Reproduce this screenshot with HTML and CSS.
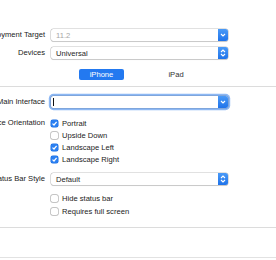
FILE: index.html
```html
<!DOCTYPE html>
<html>
<head>
<meta charset="utf-8">
<link rel="stylesheet" href="styles.css">
</head>
<body>
<div class="panel">
  <div class="row r1">
    <div class="label">Deployment Target</div>
    <div class="field">
      <span class="value placeholder">11.2</span>
      <span class="btn"><svg width="6" height="4" viewBox="0 0 6 4"><path d="M1 1 L3 3 L5 1" fill="none" stroke="#fff" stroke-width="1.1"/></svg></span>
    </div>
  </div>
  <div class="row r2">
    <div class="label">Devices</div>
    <div class="field">
      <span class="value">Universal</span>
      <span class="btn"><svg width="6" height="8" viewBox="0 0 6 8"><path d="M1 3 L3 1 L5 3 M1 5 L3 7 L5 5" fill="none" stroke="#fff" stroke-width="1.1"/></svg></span>
    </div>
  </div>
  <div class="seg">
    <span class="seg-item active">iPhone</span>
    <span class="seg-item">iPad</span>
  </div>
  <div class="divider d1"></div>
  <div class="row r3">
    <div class="label">Main Interface</div>
    <div class="field focus">
      <span class="value"><span class="caret"></span></span>
      <span class="btn"><svg width="6" height="4" viewBox="0 0 6 4"><path d="M1 1 L3 3 L5 1" fill="none" stroke="#fff" stroke-width="1.1"/></svg></span>
    </div>
  </div>
  <div class="group g1">
    <div class="label">Device Orientation</div>
    <div class="checks">
      <div class="check"><span class="box on"><svg width="7" height="7" viewBox="0 0 7 7"><path d="M1.5 3.6 L3 5 L5.6 1.8" fill="none" stroke="#fff" stroke-width="1.2"/></svg></span>Portrait</div>
      <div class="check"><span class="box"></span>Upside Down</div>
      <div class="check"><span class="box on"><svg width="7" height="7" viewBox="0 0 7 7"><path d="M1.5 3.6 L3 5 L5.6 1.8" fill="none" stroke="#fff" stroke-width="1.2"/></svg></span>Landscape Left</div>
      <div class="check"><span class="box on"><svg width="7" height="7" viewBox="0 0 7 7"><path d="M1.5 3.6 L3 5 L5.6 1.8" fill="none" stroke="#fff" stroke-width="1.2"/></svg></span>Landscape Right</div>
    </div>
  </div>
  <div class="row r4">
    <div class="label">Status Bar Style</div>
    <div class="field">
      <span class="value">Default</span>
      <span class="btn"><svg width="6" height="8" viewBox="0 0 6 8"><path d="M1 3 L3 1 L5 3 M1 5 L3 7 L5 5" fill="none" stroke="#fff" stroke-width="1.1"/></svg></span>
    </div>
  </div>
  <div class="group g2">
    <div class="label"></div>
    <div class="checks">
      <div class="check tall"><span class="box"></span>Hide status bar</div>
      <div class="check tall"><span class="box"></span>Requires full screen</div>
    </div>
  </div>
  <div class="divider d2"></div>
  <div class="divider d3"></div>
</div>
</body>
</html>
```

FILE: styles.css
```css
html, body {
  margin: 0;
  padding: 0;
  background: #ffffff;
}
body {
  width: 276px;
  height: 260px;
  overflow: hidden;
  font-family: "Liberation Sans", Arial, sans-serif;
  font-size: 7.6px;
  color: #222222;
}
.panel {
  padding-top: 29px;
  display: flex;
  flex-direction: column;
}
.row {
  display: flex;
  align-items: center;
  height: 12px;
}
.label {
  width: 45px;
  flex: none;
  display: flex;
  justify-content: flex-end;
  white-space: nowrap;
  margin-right: 6px;
  line-height: 12px;
}
.field {
  width: 177px;
  height: 12px;
  box-sizing: border-box;
  display: flex;
  align-items: stretch;
  background: #fff;
  border-radius: 2.5px;
  box-shadow: 0 0 0 0.6px rgba(0,0,0,0.22), 0 0.8px 0.8px rgba(0,0,0,0.12);
}
.field .value {
  flex: 1;
  display: flex;
  align-items: center;
  padding-left: 5px;
  color: #1e1e1e;
}
.field .placeholder {
  color: #a6a6a6;
}
.btn {
  width: 10px;
  flex: none;
  display: flex;
  align-items: center;
  justify-content: center;
  background: linear-gradient(#4a9af7, #1f73ea);
  border-radius: 0 2.5px 2.5px 0;
}
.r1 { margin-bottom: 6px; }
.r2 { margin-bottom: 10px; }
.seg {
  display: flex;
  height: 11px;
  align-items: center;
  margin-bottom: 6px;
}
.seg-item {
  display: flex;
  align-items: center;
  justify-content: center;
  height: 11px;
}
.seg-item.active {
  margin-left: 79px;
  width: 45px;
  background: #2379f0;
  color: #fff;
  border-radius: 2px;
}
.seg-item:not(.active) {
  margin-left: 45px;
  width: 14px;
  color: #333;
}
.divider {
  height: 1px;
  background: #dcdcdc;
}
.d1 { margin-bottom: 9px; }
.r3 { margin-bottom: 9px; }
.field.focus {
  box-shadow: 0 0 0 0.6px rgba(0,0,0,0.2), 0 0 0 2.2px #8db8f4;
}
.field.focus .value { padding-left: 2px; }
.caret {
  width: 1px;
  height: 8px;
  background: #111;
}
.group {
  display: flex;
  align-items: flex-start;
}
.checks {
  display: flex;
  flex-direction: column;
}
.check {
  height: 12px;
  display: flex;
  align-items: center;
  white-space: nowrap;
}
.check.tall { height: 13px; }
.box {
  width: 7px;
  height: 7px;
  box-sizing: border-box;
  border-radius: 1.8px;
  background: #fff;
  box-shadow: 0 0 0 0.7px rgba(0,0,0,0.3);
  margin-right: 4px;
  display: flex;
  align-items: center;
  justify-content: center;
}
.box.on {
  background: #2a7ff1;
  box-shadow: 0 0 0 0.5px #1c6fe0;
}
.g1 { margin-bottom: 8px; }
.r4 { margin-bottom: 7px; }
.g2 { margin-bottom: 9px; }
.d2 { margin-bottom: 29px; }
.d3 { background: #e2e2e2; }
```
